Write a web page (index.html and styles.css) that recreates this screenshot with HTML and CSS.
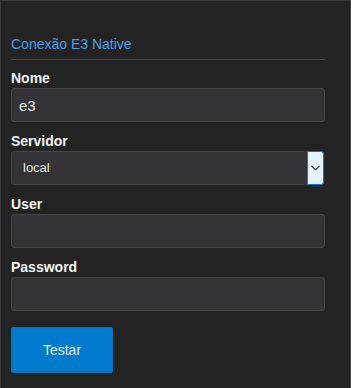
FILE: index.html
```html
<!DOCTYPE html>
<html lang="pt">

<head>
    <meta charset="utf-8">
    <meta name="viewport" content="width=device-width, initial-scale=1.0">
    <title>Conexão E3 Native</title>
    <link rel="stylesheet" href="styles.css">
</head>

<body>
    <main class="painel">
        <h1 class="titulo">Conexão E3 Native</h1>

        <div class="campo">
            <label for="nome">Nome</label>
            <input id="nome" class="entrada" type="text" value="e3">
        </div>

        <div class="campo">
            <label>Servidor</label>
            <div class="selecao">
                <span class="valor">local</span>
                <span class="seta">
                    <svg width="9" height="6" viewBox="0 0 9 6">
                        <path d="M0.5 0.8 L4.5 4.8 L8.5 0.8" fill="none" stroke="#222" stroke-width="1.1"/>
                    </svg>
                </span>
            </div>
        </div>

        <div class="campo">
            <label for="user">User</label>
            <input id="user" class="entrada" type="text">
        </div>

        <div class="campo">
            <label for="password">Password</label>
            <input id="password" class="entrada" type="password">
        </div>

        <button class="testar">Testar</button>
    </main>
</body>

</html>
```

FILE: styles.css
```css
html {
    background: #232323;
}

body {
    margin: 0;
    height: 388px;
    box-sizing: border-box;
    border: 1px solid #3b3b3b;
    border-bottom: none;
    background: #232323;
    font-family: "Liberation Sans", Arial, sans-serif;
    color: #f0f0f0;
}

.painel {
    width: 314px;
    margin-left: 10px;
    padding-top: 35px;
}

.titulo {
    margin: 0 0 10px 0;
    padding-bottom: 7px;
    border-bottom: 1px solid #474747;
    font-size: 14px;
    line-height: 16px;
    font-weight: normal;
    color: #4f9fe3;
}

.campo {
    display: flex;
    flex-direction: column;
    gap: 2px;
    margin-bottom: 11px;
}

.campo label {
    font-size: 14px;
    line-height: 16px;
    font-weight: bold;
    color: #f4f4f4;
}

.entrada {
    height: 34px;
    box-sizing: border-box;
    margin: 0;
    padding: 0 7px;
    border: 1px solid #464646;
    border-radius: 3px;
    background: #333338;
    color: #e6e6e6;
    font-family: "Liberation Sans", Arial, sans-serif;
    font-size: 15px;
    outline: none;
}

.selecao {
    display: flex;
    height: 34px;
    box-sizing: border-box;
    width: 313px;
    border: 1px solid #464646;
    border-radius: 3px;
    background: #333338;
}

.valor {
    flex: 1;
    padding-left: 11px;
    line-height: 32px;
    font-size: 13px;
    color: #e6e6e6;
}

.seta {
    display: flex;
    align-items: center;
    justify-content: center;
    width: 17px;
    margin: -1px -1px -1px 0;
    box-sizing: border-box;
    border: 1px solid #0078d7;
    border-radius: 0 3px 3px 0;
    background: #e5f1fb;
}

.testar {
    margin-top: 5px;
    width: 102px;
    height: 46px;
    border: 1px solid #0a6fbf;
    border-radius: 2px;
    background: #007acc;
    color: #e4f0fb;
    font-family: "Liberation Sans", Arial, sans-serif;
    font-size: 14px;
}
```
